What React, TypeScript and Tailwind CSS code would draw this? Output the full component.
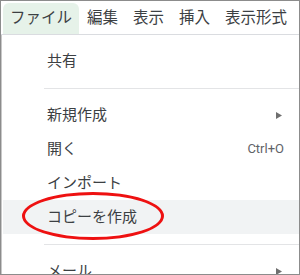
const menuBar = ["ファイル", "編集", "表示", "挿入", "表示形式"];

function Arrow() {
  return (
    <svg width="6" height="7" viewBox="0 0 6 7" className="text-[#6f6f6f]">
      <path d="M0 0 L6 3.5 L0 7 Z" fill="currentColor" />
    </svg>
  );
}

function Item({ label, right, active }: { label: string; right?: React.ReactNode; active?: boolean }) {
  return (
    <div
      className={`h-[34px] flex items-center justify-between pl-[44px] ${
        active ? "bg-[#f1f3f4]" : ""
      }`}
    >
      <span className="text-[15px] text-[#3c4043]">{label}</span>
      {right}
    </div>
  );
}

function Separator() {
  return (
    <div className="h-[20px] flex items-center pl-[41px]">
      <div className="h-px w-full bg-[#e3e4e6]" />
    </div>
  );
}

export default function App() {
  return (
    <div
      className="relative w-[300px] h-[275px] overflow-hidden bg-white border border-[#8c8c8c]"
      style={{ fontFamily: '"Roboto", "Noto Sans CJK JP", sans-serif' }}
    >
      {/* Menu bar */}
      <div className="h-[34px] flex items-end pl-[2px] border-b border-[#dadce0]">
        {menuBar.map((m, i) => (
          <div
            key={m}
            className={`h-[31px] flex items-center px-[7px] mr-px text-[15.5px] text-[#3c4043] rounded-t-md ${
              i === 0 ? "bg-[#e6f2e9]" : ""
            }`}
          >
            {m}
          </div>
        ))}
      </div>

      {/* Dropdown */}
      <div className="pt-[9px] pl-[1px] border-l border-[#c8c8c8]">
        <Item label="共有" />
        <Separator />
        <Item label="新規作成" right={<span className="pr-[17px] flex"><Arrow /></span>} />
        <Item
          label="開く"
          right={<span className="pr-[15px] text-[13px] text-[#5f6368]">Ctrl+O</span>}
        />
        <Item label="インポート" />
        <Item label="コピーを作成" active />
        <Separator />
        <Item label="メール" right={<span className="pr-[17px] flex"><Arrow /></span>} />
      </div>

      {/* Red annotation ellipse */}
      <div className="absolute left-[21px] top-[191px] w-[142px] h-[48px] rounded-[50%] border-[3px] border-[#ee1111]" />
    </div>
  );
}
